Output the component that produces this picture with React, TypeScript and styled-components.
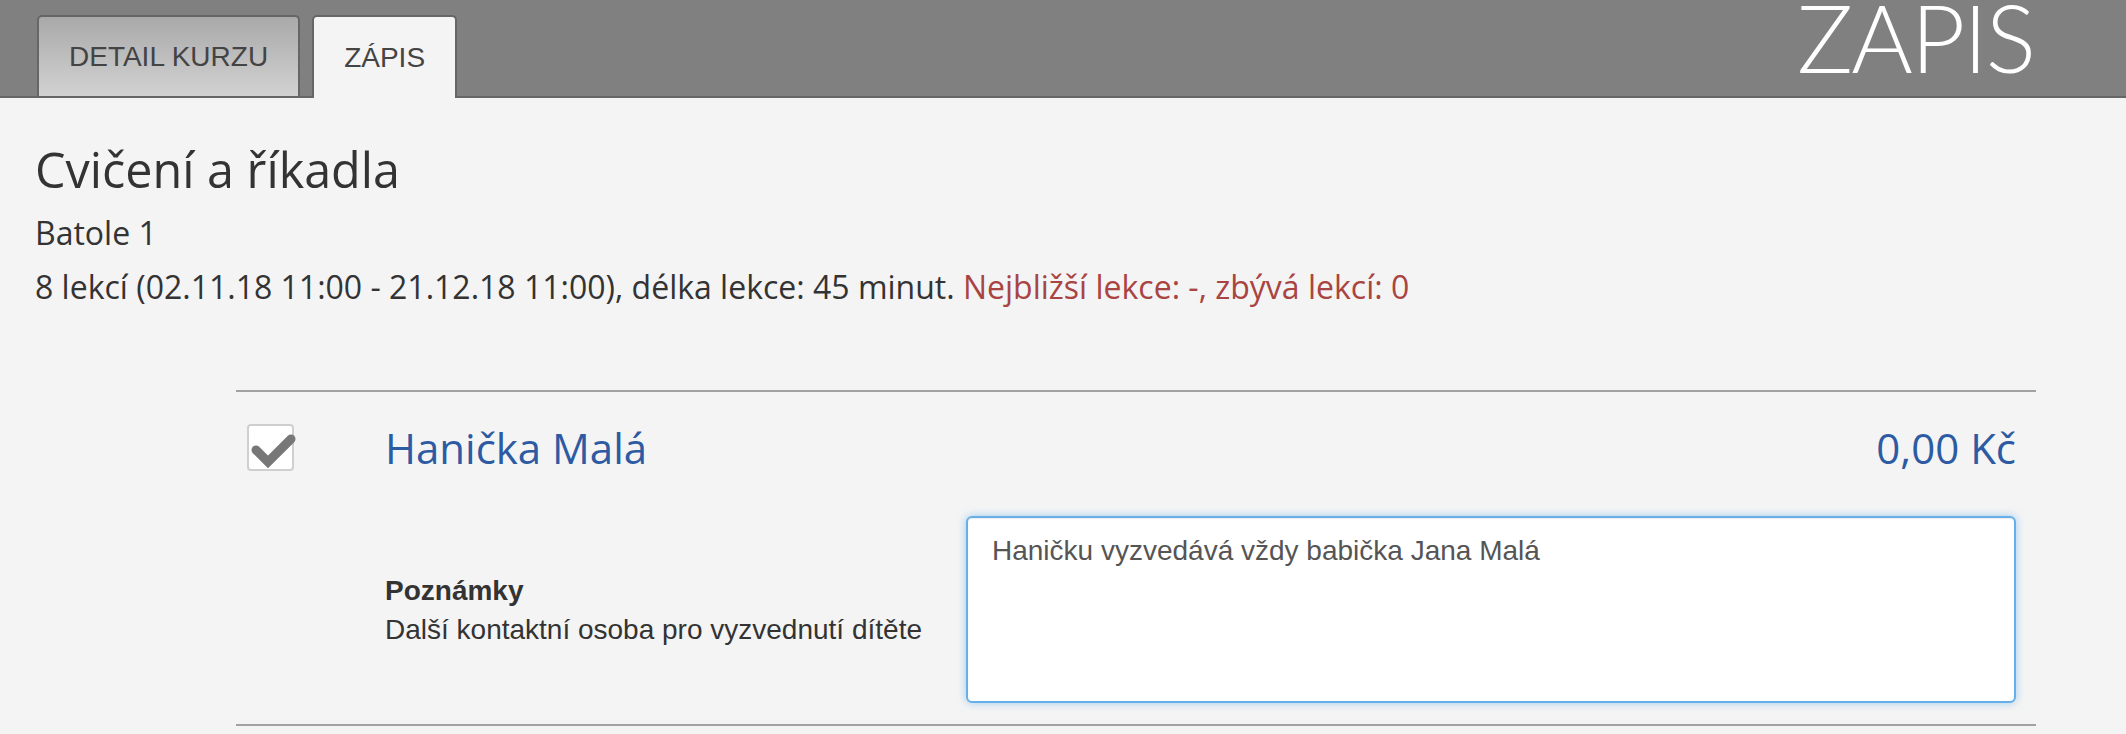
import React, { useEffect, useRef } from "react";
import styled, { createGlobalStyle } from "styled-components";

const GlobalStyle = createGlobalStyle`
  html, body { margin: 0; padding: 0; background: #f4f4f4; }
  body { font-family: "Open Sans", "Noto Sans", sans-serif; color: #333; }
  * { box-sizing: border-box; }
`;

const Header = styled.header`
  height: 98px;
  background: #808080;
  border-bottom: 2px solid #666;
  display: flex;
  justify-content: space-between;
  align-items: stretch;
  padding: 0 92px 0 37px;
`;

const TabList = styled.nav`
  align-self: flex-end;
  display: flex;
  align-items: flex-start;
  gap: 12px;
`;

const Tab = styled.div<{ $active?: boolean }>`
  display: flex;
  align-items: center;
  height: ${(p) => (p.$active ? 83 : 81)}px;
  margin-bottom: ${(p) => (p.$active ? -2 : 0)}px;
  padding: 0 ${(p) => (p.$active ? 30 : 30)}px;
  border: 2px solid #666;
  border-bottom: none;
  border-radius: 5px 5px 0 0;
  background: ${(p) =>
    p.$active ? "#f4f4f4" : "linear-gradient(to bottom, #a9a9a9, #d2d2d2)"};
  font-family: "Liberation Sans", Arial, sans-serif;
  font-size: 28px;
  color: #444;
  white-space: nowrap;
`;

const PageTitleClip = styled.div`
  height: 96px;
  overflow: hidden;
`;

const PageTitle = styled.div`
  margin-top: -10px;
  font-family: Lato, "Open Sans", sans-serif;
  font-weight: 300;
  font-size: 94px;
  line-height: 94px;
  letter-spacing: -2px;
  color: #fff;
  white-space: nowrap;
`;

const Intro = styled.div`
  padding-left: 35px;
`;

const CourseTitle = styled.h1`
  margin: 43px 0 9px;
  font-size: 48.5px;
  line-height: 56px;
  font-weight: 400;
  color: #333;
`;

const InfoLine = styled.p`
  margin: 0;
  font-size: 32px;
  line-height: 54px;
  color: #333;
  white-space: nowrap;
`;

const Danger = styled.span`
  color: #a94442;
`;

const Section = styled.section`
  margin: 76px 90px 0 236px;
  border-top: 2px solid #a2a2a2;
  border-bottom: 2px solid #a2a2a2;
  display: grid;
  grid-template-columns: 149px 581px 1fr;
  row-gap: 45px;
  align-items: center;
  padding: 32px 20px 21px 0;
`;

const CheckBox = styled.div`
  position: relative;
  margin-left: 11px;
  width: 47px;
  height: 47px;
  border: 2px solid #cfcfcf;
  border-radius: 4px;
  background: #fff;
`;

const CheckMark = styled.svg`
  position: absolute;
  left: -2px;
  top: -2px;
  overflow: visible;
`;

const ChildName = styled.div`
  font-size: 42px;
  line-height: 47px;
  color: #2d5ba3;
  white-space: nowrap;
`;

const Price = styled.div`
  justify-self: end;
  font-size: 42px;
  line-height: 47px;
  color: #2d5ba3;
  white-space: nowrap;
`;

const FieldLabel = styled.div`
  grid-column: 2;
  font-family: "Liberation Sans", Arial, sans-serif;
  font-size: 28px;
  line-height: 39px;
  color: #333;
`;

const LabelTitle = styled.div`
  font-weight: 700;
`;

const NoteArea = styled.textarea`
  grid-column: 3;
  display: block;
  width: 100%;
  height: 187px;
  margin: 0;
  padding: 13px 24px;
  border: 2px solid #66afe9;
  border-radius: 6px;
  background: #fff;
  box-shadow: inset 0 1px 1px rgba(0, 0, 0, 0.075), 0 0 9px rgba(102, 175, 233, 0.6);
  font-family: "Liberation Sans", Arial, sans-serif;
  font-size: 28px;
  line-height: 39px;
  color: #555;
  caret-color: #333;
  resize: none;
  outline: none;
`;

const NOTE = "Haničku vyzvedává vždy babička Jana Malá";

export default function App() {
  const ref = useRef<HTMLTextAreaElement>(null);
  useEffect(() => {
    const el = ref.current;
    if (el) {
      el.focus();
      el.setSelectionRange(NOTE.length, NOTE.length);
    }
  }, []);

  return (
    <>
      <GlobalStyle />
      <Header>
        <TabList>
          <Tab>DETAIL KURZU</Tab>
          <Tab $active>ZÁPIS</Tab>
        </TabList>
        <PageTitleClip>
          <PageTitle>ZÁPIS</PageTitle>
        </PageTitleClip>
      </Header>
      <Intro>
        <CourseTitle>Cvičení a říkadla</CourseTitle>
        <InfoLine>Batole 1</InfoLine>
        <InfoLine>
          8 lekcí (02.11.18 11:00 - 21.12.18 11:00), délka lekce: 45 minut.{" "}
          <Danger>Nejbližší lekce: -, zbývá lekcí: 0</Danger>
        </InfoLine>
      </Intro>
      <Section>
        <CheckBox>
          <CheckMark width="47" height="47" viewBox="0 0 47 47">
            <polyline
              points="9,26 21,38 44,15"
              fill="none"
              stroke="#777"
              strokeWidth="9"
              strokeLinecap="round"
              strokeLinejoin="miter"
            />
          </CheckMark>
        </CheckBox>
        <ChildName>Hanička Malá</ChildName>
        <Price>0,00 Kč</Price>
        <FieldLabel>
          <LabelTitle>Poznámky</LabelTitle>
          <div>Další kontaktní osoba pro vyzvednutí dítěte</div>
        </FieldLabel>
        <NoteArea ref={ref} defaultValue={NOTE} spellCheck={false} />
      </Section>
    </>
  );
}
